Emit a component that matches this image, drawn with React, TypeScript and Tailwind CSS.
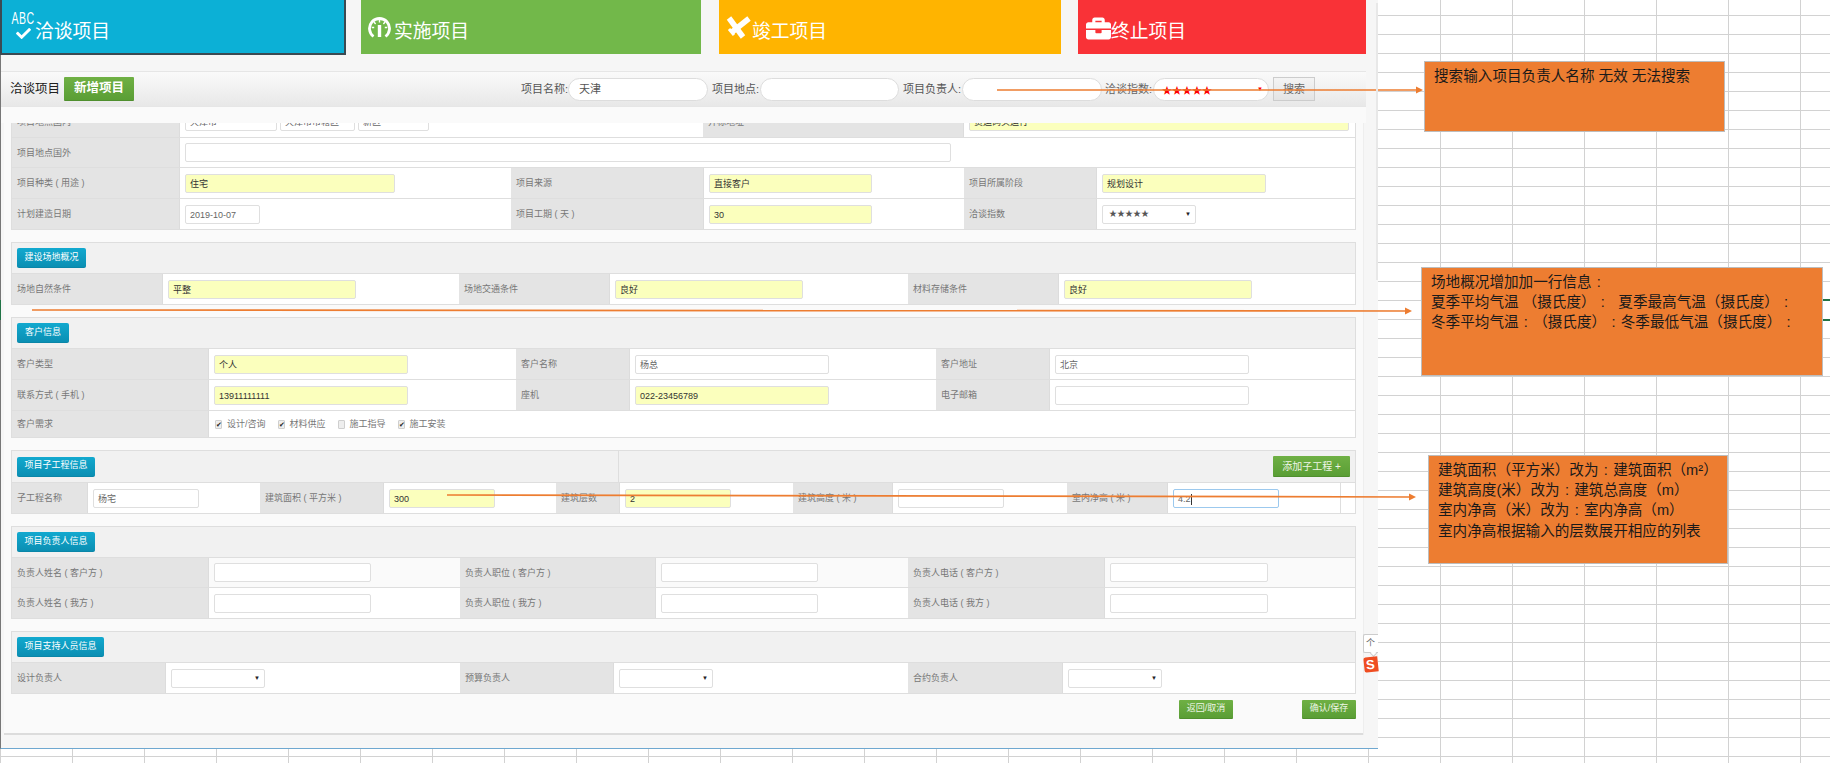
import { FaCheck, FaBriefcase } from "react-icons/fa";

const cn = (...c: string[]) => c.join(" ");

function Gauge() {
  return (
    <svg viewBox="0 0 26 23" className="w-[26px] h-[23px] mb-[3px] shrink-0" fill="none">
      <path d="M5.5 20.5 A10 10 0 1 1 17.5 20.5" stroke="#fff" strokeWidth="2.8" />
      <path d="M11.5 9v12" stroke="#fff" strokeWidth="3.4" />
      <path d="M11.5 3.5v3M6 6l1.6 2M17 6l-1.6 2M3.8 11.5h2.4M19.2 11.5h-2.4" stroke="#fff" strokeWidth="1.4" />
    </svg>
  );
}

function Plane() {
  return (
    <svg viewBox="0 0 26 26" className="w-[26px] h-[26px] mb-[1px] shrink-0" fill="none" stroke="#fff">
      <path d="M23 3.5 L6 17" strokeWidth="5.5" />
      <path d="M3 3 L17 22" strokeWidth="5.5" />
      <path d="M3 14l5 6" strokeWidth="3" />
    </svg>
  );
}

function AbcCheck() {
  return (
    <div className="w-[24px] flex flex-col items-center shrink-0 mb-[1px]">
      <span className="text-[10.5px] leading-[11px] scale-y-[1.55] tracking-[0.4px]">ABC</span>
      <FaCheck className="mt-[2px] w-[19px] h-[15px] text-white" />
    </div>
  );
}

function Card({ color, icon, title, className }: any) {
  return (
    <div className={cn("h-[54px] flex items-end text-white text-[18.8px] leading-[20px] whitespace-nowrap", color, className)}>
      {icon}
      <span>{title}</span>
    </div>
  );
}

function Input({ value = "", yellow, className = "", focus }: any) {
  return (
    <div
      className={cn(
        "h-[19px] border rounded-[2px] text-[9px] leading-[18px] px-[4px] overflow-hidden whitespace-nowrap shrink-0",
        focus ? "border-[#9cc9ee]" : "border-[#dfdfdf]",
        yellow ? "bg-[#fbffbd] text-[#333]" : "bg-white text-[#666]",
        className,
      )}
    >
      {value}
      {focus && <span className="inline-block w-px h-[11px] bg-[#333] align-middle" />}
    </div>
  );
}

function Select({ value = "", className = "" }: any) {
  return (
    <div className={cn("h-[19px] border border-[#dfdfdf] rounded-[2px] bg-white flex items-center justify-between pl-[6px] pr-[4px] text-[8px] text-[#555]", className)}>
      <span>{value}</span>
      <span className="text-[6px] text-[#222]">▼</span>
    </div>
  );
}

function Label({ text, className = "" }: any) {
  return (
    <div className={cn("bg-[#e4e4e4] text-[#777] text-[9px] flex items-center pl-[5px] pt-[2px] shrink-0 whitespace-nowrap border-r border-[#dcdcdc]", className)}>
      {text}
    </div>
  );
}

function Value({ children, className = "", bg = "bg-white" }: any) {
  return <div className={cn("flex items-center pl-[5px] shrink-0", bg, className)}>{children}</div>;
}

function Row({ children, className = "h-[31px]" }: any) {
  return <div className={cn("flex border-t border-[#dedede]", className)}>{children}</div>;
}

function TagButton({ text, className = "" }: any) {
  return (
    <div className={cn("h-[20px] rounded-[2px] bg-gradient-to-b from-[#12a9cf] to-[#0b8fb3] border-b border-[#0a86a8] text-white text-[9px] flex items-center justify-center shrink-0", className)}>
      {text}
    </div>
  );
}

function GreenButton({ text, className = "" }: any) {
  return (
    <div className={cn("rounded-[1px] bg-gradient-to-b from-[#6fb044] to-[#5a9e35] text-[#eef6e6] flex items-center justify-center border-b border-[#4f8f2e] shrink-0 whitespace-nowrap", className)}>
      {text}
    </div>
  );
}

function Section({ title, titleW, className = "", children, right }: any) {
  return (
    <div className={cn("mx-[7px] mt-[12px] w-[1345px] border border-[#dedede]", className)}>
      {right ? (
        <div className="h-[31px] bg-[#f1f1f1] flex">
          <div className="w-[607px] flex items-center pl-[5px] border-r border-[#dedede]">
            <TagButton text={title} className={titleW} />
          </div>
          <div className="flex-1 flex items-center justify-end">{right}</div>
        </div>
      ) : (
        <div className="h-[30px] bg-[#f1f1f1] flex items-center pl-[5px]">
          <TagButton text={title} className={titleW} />
        </div>
      )}
      {children}
    </div>
  );
}

function Check({ on, text }: any) {
  return (
    <div className="flex items-center gap-[5px] text-[9px] text-[#777]">
      <span className="w-[7px] h-[9px] rounded-[1px] border border-[#cfcfcf] bg-[#eee] text-[#222] text-[7px] leading-[8px] text-center">{on ? "✔" : ""}</span>
      {text}
    </div>
  );
}

// the sheet draws full-width colons centred in their cell
function CalloutLine({ text }: { text: string }) {
  const parts = text.split("：");
  return (
    <div>
      {parts.map((p, i) => (
        <span key={i}>
          {p}
          {i < parts.length - 1 && <span className="inline-block w-[14.6px] text-center">:</span>}
        </span>
      ))}
    </div>
  );
}

function Callout({ className = "", lines }: any) {
  return (
    <div className={cn("absolute bg-[#ed7d31] border-[1.5px] border-[#bdbdbd] text-[14.6px] leading-[20.2px] text-[#1a1a1a] whitespace-pre [text-spacing-trim:space-all]", className)}>
      {lines.map((l: string) => (
        <CalloutLine key={l} text={l} />
      ))}
    </div>
  );
}

function Arrow({ x1, y1, x2, y2 }: any) {
  return (
    <g>
      <line x1={x1} y1={y1} x2={x2 - 6} y2={y2} stroke="#ed7d31" strokeWidth="1.7" />
      <path d={`M${x2 - 7} ${y2 - 3.5}L${x2} ${y2}L${x2 - 7} ${y2 + 3.5}Z`} fill="#ed7d31" />
    </g>
  );
}

export default function App() {
  return (
    <div
      className="relative w-[1830px] h-[763px] overflow-hidden bg-white bg-[linear-gradient(to_right,#d2d2d2_1px,transparent_1px),linear-gradient(to_bottom,#d2d2d2_1px,transparent_1px)] bg-[size:72px_19px] bg-[position:0_15px]"
      style={{ fontFamily: '"Liberation Sans","Noto Sans CJK SC",sans-serif' }}
    >
      <div className="w-[1377px] h-[748px] bg-[#f6f6f6] border-l border-l-[#777] border-b border-b-[#6fa8d0] box-content">
        {/* status cards */}
        <div className="flex h-[71px] items-start -ml-px">
          <Card
            color="bg-[#0cb0d6]"
            title="洽谈项目"
            className="w-[346px] h-[55px] border-x-2 border-b-2 border-[#3b4a52] pl-[9px] pb-[11px]"
            icon={<AbcCheck />}
          />
          <Card color="bg-[#72b84a]" title="实施项目" className="ml-[15px] w-[340px] pl-[7px] pb-[12px]" icon={<Gauge />} />
          <Card color="bg-[#ffb400]" title="竣工项目" className="ml-[18px] w-[342px] pl-[7px] pb-[12px]" icon={<Plane />} />
          <Card
            color="bg-[#f93237]"
            title="终止项目"
            className="ml-[17px] w-[288px] pl-[8px] pb-[12px]"
            icon={<FaBriefcase className="text-white w-[25px] h-[25px] mb-[1px] shrink-0" />}
          />
        </div>

        {/* panel header */}
        <div className="w-[1365px] h-[52px] bg-[#fafafa]">
          <div className="h-[36px] border-y border-[#e6e6e6] bg-gradient-to-b from-[#fafafa] to-[#e8e8e8] flex items-center whitespace-nowrap">
            <span className="ml-[9px] w-[51px] text-[12.5px] text-[#222]">洽谈项目</span>
            <GreenButton text="新增项目" className="ml-[3px] w-[70px] h-[24px] text-[12.5px] font-bold text-white" />
            <span className="ml-[387px] w-[47px] text-[11px] text-[#555]">项目名称:</span>
            <div className="w-[140px] h-[23px] rounded-full bg-white border border-[#ddd] text-[11px] leading-[21px] pl-[10px] text-[#555]">天津</div>
            <span className="ml-[4px] w-[48px] text-[11px] text-[#555]">项目地点:</span>
            <div className="w-[139px] h-[23px] rounded-full bg-white border border-[#ddd]" />
            <span className="ml-[4px] w-[59px] text-[11px] text-[#555]">项目负责人:</span>
            <div className="w-[140px] h-[23px] rounded-full bg-white border border-[#ddd]" />
            <span className="ml-[3px] w-[48px] text-[11px] text-[#666]">洽谈指数:</span>
            <div className="w-[116px] h-[23px] rounded-full bg-white border border-[#ddd] flex items-center justify-between pl-[8px] pr-[5px] text-[10px] text-[#f00]">
              <span className="mt-[3px]">★★★★★</span>
              <span className="text-[6px]">▼</span>
            </div>
            <div className="ml-[4px] w-[42px] h-[24px] border border-[#ccc] bg-gradient-to-b from-[#f4f4f4] to-[#e4e4e4] text-[11px] text-[#666] flex items-center justify-center">搜索</div>
          </div>
        </div>

        {/* scrolled form */}
        <div className="ml-[3px] w-[1359px] h-[612px] overflow-hidden bg-[#fafafa] border-b-2 border-b-[#dcdcdc] shadow-[1px_0_0_#eeeeee]">
          <div className="mx-[7px] -mt-[17px] w-[1345px] border-x border-b border-[#dedede]">
            <div className="flex h-[31px]">
              <Label text="项目地点国内" className="w-[168px]" />
              <Value className="w-[523px] gap-[3px]">
                <Input className="w-[92px]" value="天津市" />
                <Input className="w-[75px]" value="天津市市辖区" />
                <Input className="w-[71px]" value="新区" />
              </Value>
              <Label text="开标地址" className="w-[261px]" />
              <Value className="flex-1">
                <Input yellow value="货运码头运行" className="w-[380px]" />
              </Value>
            </div>
            <Row className="h-[30px]">
              <Label text="项目地点国外" className="w-[168px]" />
              <Value className="flex-1"><Input className="w-[766px]" /></Value>
            </Row>
            <Row>
              <Label text="项目种类 ( 用途 )" className="w-[168px]" />
              <Value className="w-[331px]"><Input yellow value="住宅" className="w-[210px]" /></Value>
              <Label text="项目来源" className="w-[193px]" />
              <Value className="w-[260px]"><Input yellow value="直接客户" className="w-[163px]" /></Value>
              <Label text="项目所属阶段" className="w-[133px]" />
              <Value className="flex-1"><Input yellow value="规划设计" className="w-[164px]" /></Value>
            </Row>
            <Row>
              <Label text="计划建造日期" className="w-[168px]" />
              <Value className="w-[331px]"><Input value="2019-10-07" className="w-[75px]" /></Value>
              <Label text="项目工期 ( 天 )" className="w-[193px]" />
              <Value className="w-[260px]"><Input yellow value="30" className="w-[163px]" /></Value>
              <Label text="洽谈指数" className="w-[133px]" />
              <Value className="flex-1"><Select value="★★★★★" className="w-[94px]" /></Value>
            </Row>
          </div>

          <Section title="建设场地概况" titleW="w-[69px]">
            <Row>
              <Label text="场地自然条件" className="w-[151px]" />
              <Value className="w-[296px]"><Input yellow value="平整" className="w-[188px]" /></Value>
              <Label text="场地交通条件" className="w-[151px]" />
              <Value className="w-[298px]"><Input yellow value="良好" className="w-[188px]" /></Value>
              <Label text="材料存储条件" className="w-[151px]" />
              <Value className="flex-1"><Input yellow value="良好" className="w-[188px]" /></Value>
            </Row>
          </Section>

          <Section title="客户信息" titleW="w-[52px]">
            <Row>
              <Label text="客户类型" className="w-[197px]" />
              <Value className="w-[307px]"><Input yellow value="个人" className="w-[194px]" /></Value>
              <Label text="客户名称" className="w-[114px]" />
              <Value className="w-[306px]"><Input value="杨总" className="w-[194px]" /></Value>
              <Label text="客户地址" className="w-[114px]" />
              <Value className="flex-1"><Input value="北京" className="w-[194px]" /></Value>
            </Row>
            <Row>
              <Label text="联系方式 ( 手机 )" className="w-[197px]" />
              <Value className="w-[307px]"><Input yellow value="13911111111" className="w-[194px]" /></Value>
              <Label text="座机" className="w-[114px]" />
              <Value className="w-[306px]"><Input yellow value="022-23456789" className="w-[194px]" /></Value>
              <Label text="电子邮箱" className="w-[114px]" />
              <Value className="flex-1"><Input className="w-[194px]" /></Value>
            </Row>
            <Row className="h-[27px]">
              <Label text="客户需求" className="w-[197px]" />
              <Value className="flex-1 gap-[12px] items-start pt-[7px] pl-[6px]">
                <Check on text="设计/咨询" />
                <Check on text="材料供应" />
                <Check text="施工指导" />
                <Check on text="施工安装" />
              </Value>
            </Row>
          </Section>

          <Section
            title="项目子工程信息"
            titleW="w-[78px]"
            right={<GreenButton text="添加子工程 +" className="mr-[5px] w-[77px] h-[21px] text-[10px]" />}
          >
            <Row>
              <Label text="子工程名称" className="w-[76px]" />
              <Value className="w-[172px]"><Input value="杨宅" className="w-[106px]" /></Value>
              <Label text="建筑面积 ( 平方米 )" className="w-[124px]" />
              <Value className="w-[172px]"><Input yellow value="300" className="w-[106px]" /></Value>
              <Label text="建筑层数" className="w-[64px]" />
              <Value className="w-[173px]"><Input yellow value="2" className="w-[106px]" /></Value>
              <Label text="建筑高度 ( 米 )" className="w-[100px]" />
              <Value className="w-[174px]"><Input className="w-[106px]" /></Value>
              <Label text="室内净高 ( 米 )" className="w-[101px]" />
              <Value className="w-[173px] border-r border-[#dedede]"><Input focus value="4.2" className="w-[106px]" /></Value>
              <div className="flex-1 bg-white" />
            </Row>
          </Section>

          <Section title="项目负责人信息" titleW="w-[78px]">
            <Row className="h-[30px]">
              <Label text="负责人姓名 ( 客户方 )" className="w-[197px]" />
              <Value bg="bg-[#fafafa]" className="w-[251px]"><Input className="w-[157px]" /></Value>
              <Label text="负责人职位 ( 客户方 )" className="w-[196px]" />
              <Value bg="bg-[#fafafa]" className="w-[252px]"><Input className="w-[157px]" /></Value>
              <Label text="负责人电话 ( 客户方 )" className="w-[197px]" />
              <Value bg="bg-[#fafafa]" className="flex-1"><Input className="w-[158px]" /></Value>
            </Row>
            <Row>
              <Label text="负责人姓名 ( 我方 )" className="w-[197px]" />
              <Value className="w-[251px]"><Input className="w-[157px]" /></Value>
              <Label text="负责人职位 ( 我方 )" className="w-[196px]" />
              <Value className="w-[252px]"><Input className="w-[157px]" /></Value>
              <Label text="负责人电话 ( 我方 )" className="w-[197px]" />
              <Value className="flex-1"><Input className="w-[158px]" /></Value>
            </Row>
          </Section>

          <Section title="项目支持人员信息" titleW="w-[87px]">
            <Row>
              <Label text="设计负责人" className="w-[154px]" />
              <Value className="w-[294px]"><Select className="w-[94px]" /></Value>
              <Label text="预算负责人" className="w-[154px]" />
              <Value className="w-[294px]"><Select className="w-[94px]" /></Value>
              <Label text="合约负责人" className="w-[155px]" />
              <Value className="flex-1"><Select className="w-[94px]" /></Value>
            </Row>
          </Section>

          <div className="mt-[6px] w-[1352px] flex justify-end gap-[69px] text-[9px]">
            <GreenButton text="返回/取消" className="w-[54px] h-[19px]" />
            <GreenButton text="确认/保存" className="w-[54px] h-[19px]" />
          </div>
        </div>
      </div>

      {/* annotations */}
      <Callout
        className="left-[1424px] top-[61px] w-[301px] h-[71px] pl-[9px] pt-[4px]"
        lines={["搜索输入项目负责人名称 无效 无法搜索"]}
      />
      <Callout
        className="left-[1421px] top-[267px] w-[402px] h-[109px] pl-[9px] pt-[4px]"
        lines={[
          "场地概况增加加一行信息：",
          "夏季平均气温 （摄氏度）：  夏季最高气温（摄氏度）：",
          "冬季平均气温：（摄氏度）：冬季最低气温（摄氏度）：",
        ]}
      />
      <Callout
        className="left-[1428px] top-[455px] w-[300px] h-[109px] pl-[9px] pt-[4px]"
        lines={[
          "建筑面积（平方米）改为：建筑面积（m²）",
          "建筑高度(米）改为：建筑总高度（m）",
          "室内净高（米）改为：室内净高（m）",
          "室内净高根据输入的层数展开相应的列表",
        ]}
      />
      <svg className="absolute left-0 top-0 w-[1830px] h-[763px] pointer-events-none" viewBox="0 0 1830 763">
        <Arrow x1={997} y1={90} x2={1423} y2={90} />
        <Arrow x1={32} y1={310} x2={1412} y2={311} />
        <Arrow x1={447} y1={495} x2={1416} y2={497} />
      </svg>

      <div className="absolute left-[1376px] top-[3px] w-[2px] h-[277px] bg-[#e8e8e8]" />
      <div className="absolute left-[1823px] top-[299px] w-[7px] h-[2px] bg-[#217346]" />
      <div className="absolute left-[1823px] top-[319px] w-[7px] h-[2px] bg-[#217346]" />
      <div className="absolute left-0 top-[300px] w-px h-[20px] bg-[#217346]" />

      {/* input method widget */}
      <div className="absolute left-[1363px] top-[634px] w-[15px] h-[19px] bg-white border-l border-y border-[#ccc] rounded-l-[2px] text-[9px] text-[#666] flex items-center pl-[2px]">个</div>
      <div className="absolute left-[1371px] top-[651px] w-[5px] h-[5px] bg-white border-r border-b border-[#ccc] rotate-45" />
      <div className="absolute left-[1364px] top-[657px] w-[14px] h-[15px] bg-[#ef4d21] -rotate-6 rounded-l-[2px] overflow-hidden text-white text-[13px] font-bold leading-[15px] pl-[2px]">S</div>
    </div>
  );
}
